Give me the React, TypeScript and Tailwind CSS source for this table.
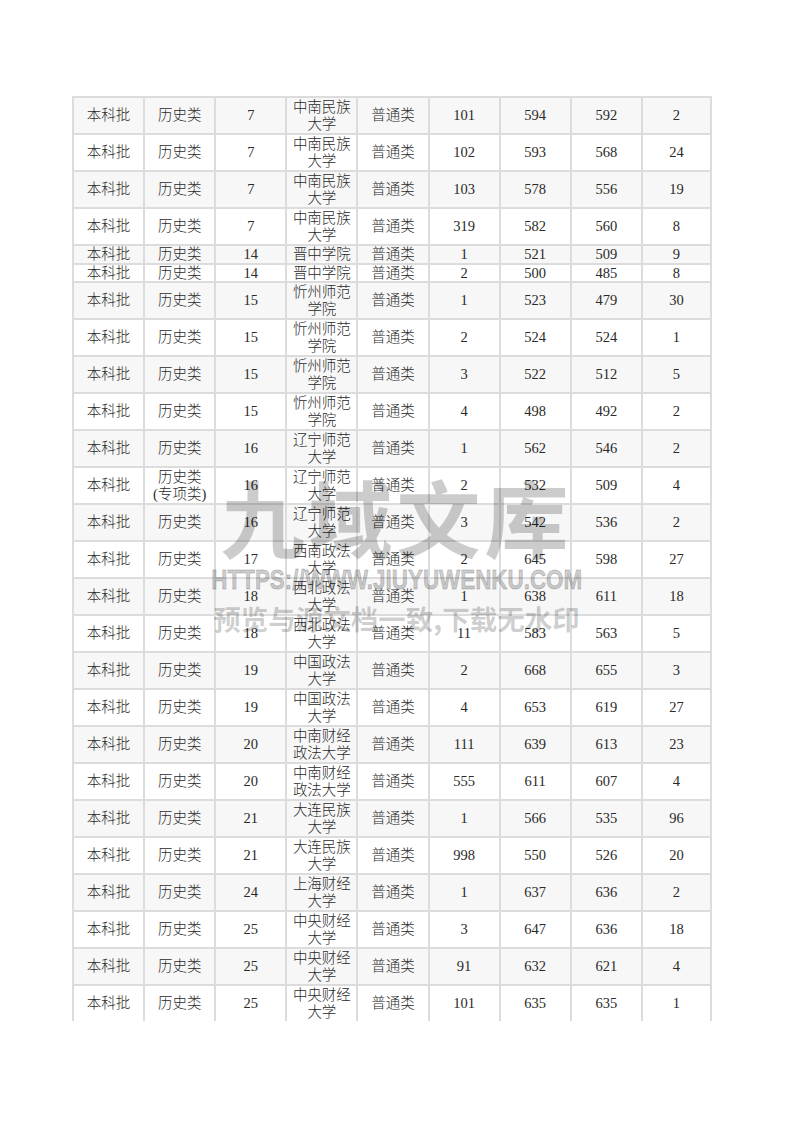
type Row = {
  batch: string;
  subject: string[];
  code: string;
  school: string[];
  kind: string;
  major: string;
  max: string;
  min: string;
  plan: string;
  single?: boolean;
};

const raw: [string, string, string[], string, string, string, string, boolean?][] = [
  ['历史类', '7', ['中南民族', '大学'], '101', '594', '592', '2'],
  ['历史类', '7', ['中南民族', '大学'], '102', '593', '568', '24'],
  ['历史类', '7', ['中南民族', '大学'], '103', '578', '556', '19'],
  ['历史类', '7', ['中南民族', '大学'], '319', '582', '560', '8'],
  ['历史类', '14', ['晋中学院'], '1', '521', '509', '9', true],
  ['历史类', '14', ['晋中学院'], '2', '500', '485', '8', true],
  ['历史类', '15', ['忻州师范', '学院'], '1', '523', '479', '30'],
  ['历史类', '15', ['忻州师范', '学院'], '2', '524', '524', '1'],
  ['历史类', '15', ['忻州师范', '学院'], '3', '522', '512', '5'],
  ['历史类', '15', ['忻州师范', '学院'], '4', '498', '492', '2'],
  ['历史类', '16', ['辽宁师范', '大学'], '1', '562', '546', '2'],
  ['历史类|(专项类)', '16', ['辽宁师范', '大学'], '2', '532', '509', '4'],
  ['历史类', '16', ['辽宁师范', '大学'], '3', '542', '536', '2'],
  ['历史类', '17', ['西南政法', '大学'], '2', '645', '598', '27'],
  ['历史类', '18', ['西北政法', '大学'], '1', '638', '611', '18'],
  ['历史类', '18', ['西北政法', '大学'], '11', '583', '563', '5'],
  ['历史类', '19', ['中国政法', '大学'], '2', '668', '655', '3'],
  ['历史类', '19', ['中国政法', '大学'], '4', '653', '619', '27'],
  ['历史类', '20', ['中南财经', '政法大学'], '111', '639', '613', '23'],
  ['历史类', '20', ['中南财经', '政法大学'], '555', '611', '607', '4'],
  ['历史类', '21', ['大连民族', '大学'], '1', '566', '535', '96'],
  ['历史类', '21', ['大连民族', '大学'], '998', '550', '526', '20'],
  ['历史类', '24', ['上海财经', '大学'], '1', '637', '636', '2'],
  ['历史类', '25', ['中央财经', '大学'], '3', '647', '636', '18'],
  ['历史类', '25', ['中央财经', '大学'], '91', '632', '621', '4'],
  ['历史类', '25', ['中央财经', '大学'], '101', '635', '635', '1'],
];

const rows: Row[] = raw.map(([subject, code, school, major, max, min, plan, single]) => ({
  batch: '本科批',
  subject: subject.split('|'),
  code,
  school,
  kind: '普通类',
  major,
  max,
  min,
  plan,
  single,
}));

function Cell({ lines, last }: { lines: string[]; last?: boolean }) {
  return (
    <div
      className={`flex flex-col items-center justify-center border-l-2 border-[#dcdcdc] text-center leading-[17px] ${
        last ? 'border-r-2' : ''
      }`}
    >
      {lines.map((l, i) => (
        <span key={i}>{l}</span>
      ))}
    </div>
  );
}

export default function App() {
  return (
    <div className="relative min-h-[1122px] w-[793px] bg-white pl-[72px] pt-[96px] font-['Liberation_Serif','Noto_Sans_CJK_SC',serif] text-[14.5px] font-light text-[#2a2a2a]">
      <div className="w-[640px]">
        {rows.map((r, i) => (
          <div
            key={i}
            className={`grid grid-cols-9 border-t-2 border-[#dcdcdc] ${
              r.single ? (i === 4 ? 'h-[19px]' : 'h-[18px]') : 'h-[37px]'
            } ${i % 2 === 0 ? 'bg-[#f7f7f7]' : 'bg-white'}`}
          >
            <Cell lines={[r.batch]} />
            <Cell lines={r.subject} />
            <Cell lines={[r.code]} />
            <Cell lines={r.school} />
            <Cell lines={[r.kind]} />
            <Cell lines={[r.major]} />
            <Cell lines={[r.max]} />
            <Cell lines={[r.min]} />
            <Cell lines={[r.plan]} last />
          </div>
        ))}
      </div>

      {/* watermark */}
      <div className="pointer-events-none absolute left-0 top-[468px] flex w-[793px] flex-col items-center font-['Noto_Sans_CJK_SC',sans-serif] font-bold text-black/20">
        <div className="text-[84px] leading-[96px] tracking-[4px]">九域文库</div>
        <div className="scale-x-[0.8] font-['Liberation_Sans',sans-serif] text-[28px] font-bold leading-[32px] [-webkit-text-stroke:1px_rgba(0,0,0,0.2)]">
          HTTPS://WWW.JIUYUWENKU.COM
        </div>
        <div className="mt-[4px] text-[27.5px] leading-[36px]">预览与源文档一致,下载无水印</div>
      </div>
    </div>
  );
}
